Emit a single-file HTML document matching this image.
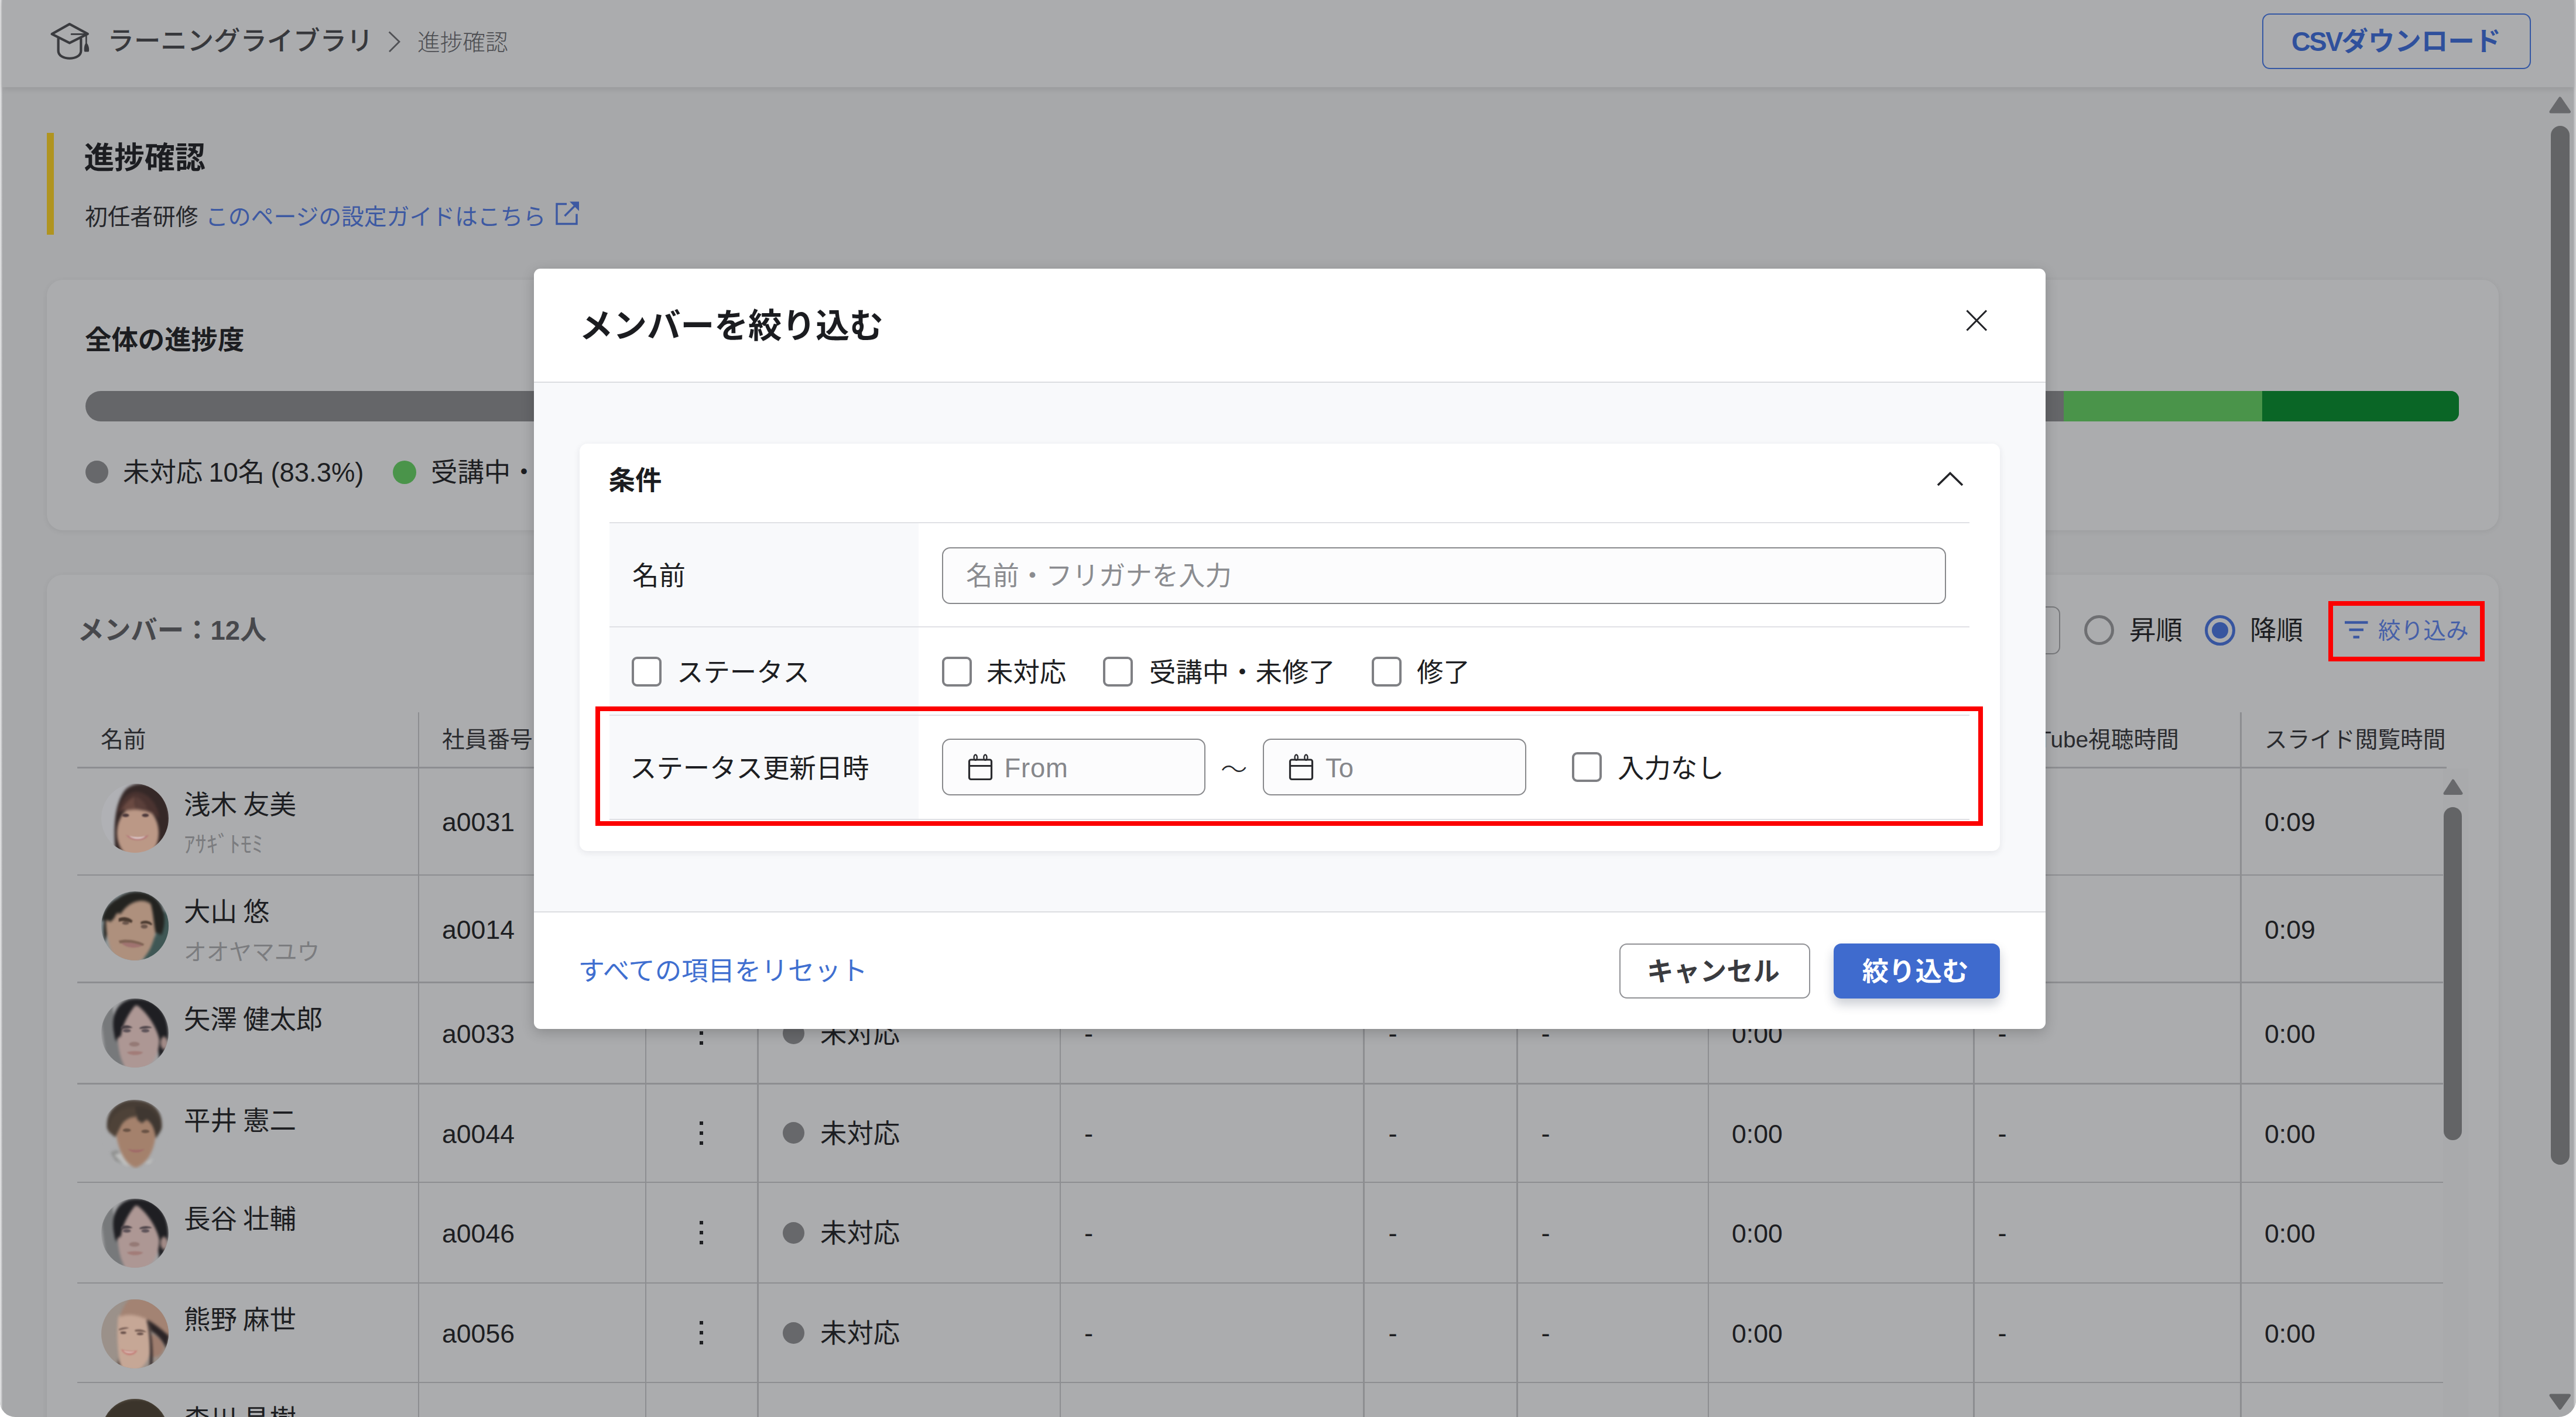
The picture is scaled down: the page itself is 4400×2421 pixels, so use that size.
<!DOCTYPE html>
<html lang="ja">
<head>
<meta charset="utf-8">
<title>進捗確認</title>
<style>
*{box-sizing:border-box;margin:0;padding:0}
html,body{width:4400px;height:2421px;overflow:hidden;background:#fff}
body{position:relative;font-family:"Liberation Sans","Noto Sans CJK JP",sans-serif;color:#1d1e22;font-size:45.4px;line-height:1;word-spacing:-.053em}
.abs{position:absolute}
.t{position:absolute;white-space:nowrap;line-height:60px;height:60px}
.b{font-weight:700}
#win{position:absolute;left:0;top:0;width:4400px;height:2421px;background:#a7a8aa;border-radius:0 0 30px 26px;overflow:hidden}
#edgeL{position:absolute;left:0;top:0;width:4px;height:2421px;background:linear-gradient(90deg,#e9e9ea,#b4b5b7)}
#edgeR{position:absolute;left:4396px;top:0;width:4px;height:2421px;background:linear-gradient(90deg,#b4b5b7,#d5d5d6)}
#hdr{position:absolute;left:4px;top:0;width:4392px;height:149px;background:#abacae;box-shadow:0 3px 10px rgba(0,0,0,.10)}
.card{position:absolute;background:#abacae;border-radius:27px;box-shadow:0 2px 10px rgba(0,0,0,.07)}
.hl{position:absolute;height:2.6px;background:#8d8e91}
.vl{position:absolute;width:2.6px;background:#8d8e91}
.dot{position:absolute;border-radius:50%;background:#67686b}
.kebab{position:absolute;width:6px;height:6px;background:#1f2023;box-shadow:0 17px 0 #1f2023,0 34px 0 #1f2023}
.av{position:absolute;width:115px;height:118px;border-radius:50%;overflow:hidden}
.red{position:absolute;border:8px solid #fc0000}
/* modal */
#modal{position:absolute;left:912px;top:459px;width:2582px;height:1299px;background:#fff;border-radius:11px;box-shadow:0 6px 22px rgba(0,0,0,.20);overflow:hidden}
.cb{position:absolute;width:51px;height:51px;border:4px solid #7f8084;border-radius:9px;background:#fff}
.inp{position:absolute;border:2.5px solid #88898c;border-radius:14px;background:#fcfcfd}
</style>
</head>
<body>
<div id="win">
<div id="edgeL"></div><div id="edgeR"></div>

<!-- ===== header ===== -->
<div id="hdr"></div>
<svg class="abs" style="left:80px;top:32px" width="80" height="76" viewBox="80 32 80 76" fill="none" stroke="#3a3b3f" stroke-width="4.2" stroke-linejoin="round" stroke-linecap="round">
<path d="M118.8 41.2 L149.8 57.9 L118.8 73.4 L88.6 58.1 Z"/>
<path d="M99.6 66 V87 C99.6 104 138.3 104 138.3 87 V66"/>
<path d="M122 58.4 H147.3 V75" stroke-width="2.6"/>
<path d="M146.6 75.5 C145 79 144.6 83 145 87.2 H150.8 C151.4 83 150.4 79 148.4 75.5 Z" fill="#3a3b3f" stroke-width="2.4"/>
</svg>
<div class="t" style="left:183.5px;top:41px;font-weight:500;color:#37383c;font-family:'Liberation Sans','Noto Sans CJK JP',sans-serif">ラーニングライブラリ</div>
<svg class="abs" style="left:655px;top:48px" width="36" height="46" viewBox="655 48 36 46" fill="none" stroke="#505155" stroke-width="2.8"><path d="M664.6 54.5 L682 71.3 L665 88.3"/></svg>
<div class="t" style="left:713px;top:43px;font-size:38.7px;color:#4d4e52;font-weight:300">進捗確認</div>

<div class="abs" style="left:3863.5px;top:22.5px;width:459px;height:95px;border:2.6px solid #3558a4;border-radius:13px"></div>
<div class="t b" style="left:3864px;width:458px;text-align:center;top:42px;color:#2f509c"><span style="letter-spacing:-2.6px">CSV</span>ダウンロード</div>

<!-- scrollbar main -->
<svg class="abs" style="left:4350px;top:160px" width="46" height="40" viewBox="4350 160 46 40"><path d="M4372.7 168 L4388.5 191 H4357 Z" fill="#68696c" stroke="#68696c" stroke-width="5" stroke-linejoin="round"/></svg>
<div class="abs" style="left:4357px;top:215px;width:32px;height:1775px;border-radius:16px;background:#636466"></div>
<svg class="abs" style="left:4350px;top:2376px" width="46" height="40" viewBox="4350 2376 46 40"><path d="M4372.7 2406 L4388.5 2384 H4357 Z" fill="#636466" stroke="#636466" stroke-width="5" stroke-linejoin="round"/></svg>

<!-- ===== page heading ===== -->
<div class="abs" style="left:80px;top:227px;width:12px;height:174px;background:#b09420"></div>
<div class="t b" style="left:143.5px;top:240px;font-size:51.8px;color:#1c1d21">進捗確認</div>
<div class="t" style="left:145px;top:341px;font-size:38.7px;color:#25262a">初任者研修</div>
<div class="t" style="left:351px;top:341px;font-size:38.8px;color:#3d59a2">このページの設定ガイドはこちら</div>
<svg class="abs" style="left:945px;top:338px" width="50" height="50" viewBox="945 338 50 50" fill="none" stroke="#3d59a2" stroke-width="3.4"><path d="M968 348.5 H951 V382.5 H985 V365.5"/><path d="M964.5 369 L986 347.5"/><path d="M973 344.4 H989 V360.4 Z" fill="#3d59a2" stroke="none"/></svg>

<!-- ===== card 1 ===== -->
<div class="card" style="left:80px;top:478px;width:4188px;height:428px"></div>
<div class="t b" style="left:145px;top:552px;font-size:45.4px;color:#1c1d21">全体の進捗度</div>
<div class="abs" style="left:146px;top:668px;width:4054px;height:52px;border-radius:26px 14px 14px 26px;overflow:hidden;background:#656669">
 <div class="abs" style="left:3379px;top:0;width:339px;height:52px;background:#4a944a"></div>
 <div class="abs" style="left:3718px;top:0;width:340px;height:52px;background:#0a6626"></div>
</div>
<div class="dot" style="left:146px;top:787px;width:39px;height:39px"></div>
<div class="t" style="left:210px;top:778px;">未対応 10名 (83.3%)</div>
<div class="dot" style="left:671px;top:787px;width:40px;height:40px;background:#4a944a"></div>
<div class="t" style="left:736px;top:778px">受講中・未修了 1名 (8.3%)</div>

<!-- ===== card 2 ===== -->
<div class="card" style="left:80px;top:982px;width:4188px;height:1600px"></div>
<div class="t b" style="left:132.5px;top:1048px;color:#47484c">メンバー：12人</div>
<div class="abs" style="left:3000px;top:1036px;width:519px;height:82px;border:2.6px solid #77787b;border-radius:13px"></div>
<div class="abs" style="left:3560px;top:1051px;width:51px;height:51px;border-radius:50%;border:5.4px solid #6e6f72"></div>
<div class="t" style="left:3637px;top:1048px">昇順</div>
<div class="abs" style="left:3766px;top:1051px;width:52px;height:52px;border-radius:50%;border:5.6px solid #37559f"></div>
<div class="abs" style="left:3778px;top:1063px;width:28px;height:28px;border-radius:50%;background:#37559f"></div>
<div class="t" style="left:3843px;top:1048px">降順</div>
<svg class="abs" style="left:4000px;top:1055px" width="50" height="42" viewBox="4000 1055 50 42" fill="none" stroke="#3a57a2" stroke-width="4.6"><path d="M4005 1063.5 H4044.5 M4012.5 1076 H4037 M4019.5 1088.5 H4030"/></svg>
<div class="t" style="left:4062px;top:1048px;font-size:38.7px;color:#4660a8">絞り込み</div>
<div class="red" style="left:3977px;top:1027px;width:267px;height:103px"></div>

<!--TABLE-->
<div class="t" style="left:172px;top:1234.0px;font-size:38.7px;color:#2a2b2f;">名前</div>
<div class="t" style="left:755px;top:1234.0px;font-size:38.7px;color:#2a2b2f;">社員番号</div>
<div class="t" style="left:1335px;top:1234.0px;font-size:38.7px;color:#2a2b2f;">ステータス</div>
<div class="t" style="left:1852px;top:1234.0px;font-size:38.7px;color:#2a2b2f;">ステータス更新日時</div>
<div class="t" style="left:2370px;top:1234.0px;font-size:38.7px;color:#2a2b2f;">受講率</div>
<div class="t" style="left:2632px;top:1234.0px;font-size:38.7px;color:#2a2b2f;">テスト</div>
<div class="t" style="left:2958px;top:1234.0px;font-size:38.7px;color:#2a2b2f;">動画視聴時間</div>
<div class="t" style="left:3415px;top:1234.0px;font-size:38.7px;color:#2a2b2f;">YouTube視聴時間</div>
<div class="t" style="left:3868px;top:1234.0px;font-size:38.7px;color:#2a2b2f;">スライド閲覧時間</div>
<div class="hl" style="left:132px;top:1310px;width:4047px"></div>
<div class="hl" style="left:132px;top:1493.7px;width:4041px"></div>
<div class="hl" style="left:132px;top:1677.3px;width:4041px"></div>
<div class="hl" style="left:132px;top:1850.3px;width:4041px"></div>
<div class="hl" style="left:132px;top:2018.7px;width:4041px"></div>
<div class="hl" style="left:132px;top:2190.7px;width:4041px"></div>
<div class="hl" style="left:132px;top:2360.7px;width:4041px"></div>
<div class="vl" style="left:713.7px;top:1217px;height:1300px"></div>
<div class="vl" style="left:1101.7px;top:1217px;height:1300px"></div>
<div class="vl" style="left:1293.3px;top:1217px;height:1300px"></div>
<div class="vl" style="left:1809.7px;top:1217px;height:1300px"></div>
<div class="vl" style="left:2328.2px;top:1217px;height:1300px"></div>
<div class="vl" style="left:2590.2px;top:1217px;height:1300px"></div>
<div class="vl" style="left:2916.7px;top:1217px;height:1300px"></div>
<div class="vl" style="left:3370.2px;top:1217px;height:1300px"></div>
<div class="vl" style="left:3826.4px;top:1217px;height:1300px"></div>
<div class="av" style="left:172.5px;top:1339.0px"><svg width="115" height="118" viewBox="0 0 116 118" preserveAspectRatio="none"><rect width="116" height="118" fill="#b0b1b5"/><g style="filter:blur(2.4px)">
<path d="M25 122 C20 80 22 36 40 12 C54 -6 96 -6 110 24 C122 50 120 90 112 122 Z" fill="#352827"/>
<ellipse cx="63" cy="84" rx="36" ry="46" fill="#bb9886"/>
<path d="M28 50 C34 22 50 14 60 14 C76 14 98 30 100 60 C88 48 74 44 58 44 C46 44 36 46 28 50 Z" fill="#4a3330"/>
<path d="M34 46 C42 30 52 24 58 22 C56 32 58 40 62 44 C50 42 42 44 34 46 Z" fill="#6a4a42"/>
<path d="M60 22 C70 26 76 34 80 44 C72 42 66 42 62 44 C58 36 58 28 60 22 Z" fill="#5a3f3a"/>
</g><g style="filter:blur(1.3px)">
<ellipse cx="42" cy="54" rx="6" ry="3" fill="#4d3a3c"/><ellipse cx="76" cy="54" rx="6" ry="3" fill="#4d3a3c"/>
<path d="M42 87 C52 92 72 92 82 87 C76 100 50 100 42 87 Z" fill="#b57c7b"/>
<path d="M48 89 C56 92 70 92 76 89 C72 96 54 96 48 89 Z" fill="#dccaca"/>
</g></svg></div>
<div class="t" style="left:314px;top:1345.5px;">浅木 友美</div>
<div class="t" style="left:314px;top:1413.0px;font-size:38.7px;color:#7b7c7f;">ｱｻｷﾞﾄﾓﾐ</div>
<div class="t" style="left:755px;top:1375.2px;font-size:44.6px;">a0031</div>
<div class="t" style="left:3868px;top:1375.2px;font-size:44.6px;">0:09</div>
<div class="av" style="left:172.5px;top:1522.5px"><svg width="115" height="118" viewBox="0 0 116 118" preserveAspectRatio="none"><rect width="116" height="118" fill="#8d989c"/><g style="filter:blur(2.4px)">
<path d="M70 122 L98 66 L100 30 L122 40 L122 122 Z" fill="#3f5755"/>
<path d="M6 88 C-6 30 30 0 62 0 C100 0 118 36 104 74 L92 70 L88 30 L40 36 L14 56 Z" fill="#232320"/>
<path d="M8 50 C10 42 22 36 34 38 C44 20 70 8 86 22 C96 34 96 60 92 76 C86 100 74 118 60 122 L30 122 C14 104 8 76 8 50 Z" fill="#ae907d"/>
<path d="M0 50 C6 20 30 4 58 8 C46 16 30 28 22 46 L16 52 C10 48 4 50 0 50 Z" fill="#232320"/>
<path d="M84 18 C98 28 100 54 94 72 C90 56 90 34 84 18 Z" fill="#232320"/>
</g><g style="filter:blur(1.3px)">
<path d="M30 46 C38 42 48 44 54 50 L52 54 C44 50 36 50 30 52 Z" fill="#4a3a30"/>
<path d="M68 52 C76 48 84 50 88 56 L86 58 C80 54 74 54 68 56 Z" fill="#4a3a30"/>
<ellipse cx="74" cy="60" rx="6" ry="3.5" fill="#6b564c"/><ellipse cx="42" cy="54" rx="6" ry="3" fill="#6b564c"/>
<path d="M34 88 C46 84 62 88 72 92 C62 98 44 98 34 88 Z" fill="#a07370"/>
<path d="M30 84 C44 80 64 84 74 90 L72 93 C60 88 44 86 32 89 Z" fill="#7f6354"/>
</g></svg></div>
<div class="t" style="left:314px;top:1529.0px;">大山 悠</div>
<div class="t" style="left:314px;top:1596.5px;font-size:38.7px;color:#7b7c7f;">オオヤマユウ</div>
<div class="t" style="left:755px;top:1558.8px;font-size:44.6px;">a0014</div>
<div class="t" style="left:3868px;top:1558.8px;font-size:44.6px;">0:09</div>
<div class="av" style="left:172.5px;top:1706.1px"><svg width="115" height="118" viewBox="0 0 116 118" preserveAspectRatio="none"><rect width="116" height="118" fill="#a1a2a4"/><g style="filter:blur(2.4px)">
<path d="M0 40 L18 10 L40 118 L10 118 Z" fill="#77797b"/>
<path d="M26 74 C10 30 30 -2 62 0 C104 0 124 40 112 86 L100 104 L92 40 L40 30 Z" fill="#1f1f23"/>
<path d="M28 56 C30 30 46 14 60 12 C80 14 98 36 100 70 C100 96 88 116 70 122 L44 122 C32 106 28 82 28 56 Z" fill="#ad9794"/>
<path d="M24 70 C16 36 36 10 60 10 C48 24 36 44 34 64 Z" fill="#1f1f23"/>
<path d="M60 10 C88 12 106 40 102 78 C98 54 84 28 60 10 Z" fill="#1f1f23"/>
<ellipse cx="108" cy="76" rx="6" ry="11" fill="#a18a86"/>
</g><g style="filter:blur(1.3px)">
<path d="M34 48 C42 44 50 46 54 50 L34 52 Z M66 50 C72 46 82 46 88 50 L66 52 Z" fill="#4b4247"/>
<ellipse cx="44" cy="55" rx="7" ry="3" fill="#5d5258"/><ellipse cx="76" cy="55" rx="7" ry="3" fill="#5d5258"/>
<ellipse cx="57" cy="78" rx="9" ry="4" fill="#957a76"/>
<path d="M44 92 C52 89 64 89 72 92 C66 98 50 98 44 92 Z" fill="#a27c78"/>
</g></svg></div>
<div class="t" style="left:314px;top:1712.6px;">矢澤 健太郎</div>
<div class="t" style="left:755px;top:1737.1px;font-size:44.6px;">a0033</div>
<div class="kebab" style="left:1195px;top:1745.1px"></div>
<div class="dot" style="left:1336.5px;top:1746.6px;width:37px;height:37px"></div>
<div class="t" style="left:1401px;top:1737.1px;">未対応</div>
<div class="t" style="left:1852px;top:1737.1px;">-</div>
<div class="t" style="left:2371.5px;top:1737.1px;">-</div>
<div class="t" style="left:2632.5px;top:1737.1px;">-</div>
<div class="t" style="left:3412.5px;top:1737.1px;">-</div>
<div class="t" style="left:2958px;top:1737.1px;font-size:44.6px;">0:00</div>
<div class="t" style="left:3868px;top:1737.1px;font-size:44.6px;">0:00</div>
<div class="av" style="left:172.5px;top:1879.1px"><svg width="115" height="118" viewBox="0 0 116 118" preserveAspectRatio="none"><rect width="116" height="118" fill="#abacae"/><g style="filter:blur(2.4px)">
<path d="M16 90 L26 86 L46 100 L44 112 L24 104 Z" fill="#8e8f8e"/>
<path d="M22 94 L44 88 L60 114 L40 112 Z" fill="#bdbebd"/>
<path d="M72 108 L90 100 L84 110 Z" fill="#bdbebd"/>
<path d="M10 50 C6 16 34 -2 58 0 C88 0 108 20 104 50 L96 62 L88 36 L26 40 L22 60 Z" fill="#473d35"/>
<path d="M24 44 C30 30 50 24 60 26 C76 26 92 34 94 52 C94 80 82 108 60 116 C40 112 26 80 24 44 Z" fill="#a4816c"/>
<path d="M12 54 C14 24 40 10 60 14 L60 30 C52 28 40 34 34 44 L24 64 Z" fill="#4e4238"/>
<path d="M58 12 C84 8 104 28 102 54 L94 66 C92 48 86 38 78 34 L70 40 L62 34 Z" fill="#3f3731"/>
</g><g style="filter:blur(1.3px)">
<ellipse cx="44" cy="52" rx="7" ry="3" fill="#6a5345"/><ellipse cx="76" cy="54" rx="7" ry="3" fill="#6a5345"/>
<path d="M46 84 C54 86 66 86 74 84 C68 92 52 92 46 84 Z" fill="#a06b68"/>
</g></svg></div>
<div class="t" style="left:314px;top:1885.6px;">平井 憲二</div>
<div class="t" style="left:755px;top:1907.8px;font-size:44.6px;">a0044</div>
<div class="kebab" style="left:1195px;top:1915.8px"></div>
<div class="dot" style="left:1336.5px;top:1917.3px;width:37px;height:37px"></div>
<div class="t" style="left:1401px;top:1907.8px;">未対応</div>
<div class="t" style="left:1852px;top:1907.8px;">-</div>
<div class="t" style="left:2371.5px;top:1907.8px;">-</div>
<div class="t" style="left:2632.5px;top:1907.8px;">-</div>
<div class="t" style="left:3412.5px;top:1907.8px;">-</div>
<div class="t" style="left:2958px;top:1907.8px;font-size:44.6px;">0:00</div>
<div class="t" style="left:3868px;top:1907.8px;font-size:44.6px;">0:00</div>
<div class="av" style="left:172.5px;top:2047.5px"><svg width="115" height="118" viewBox="0 0 116 118" preserveAspectRatio="none"><rect width="116" height="118" fill="#a1a2a4"/><g style="filter:blur(2.4px)">
<path d="M0 40 L18 10 L40 118 L10 118 Z" fill="#77797b"/>
<path d="M26 74 C10 30 30 -2 62 0 C104 0 124 40 112 86 L100 104 L92 40 L40 30 Z" fill="#1f1f23"/>
<path d="M28 56 C30 30 46 14 60 12 C80 14 98 36 100 70 C100 96 88 116 70 122 L44 122 C32 106 28 82 28 56 Z" fill="#ad9794"/>
<path d="M24 70 C16 36 36 10 60 10 C48 24 36 44 34 64 Z" fill="#1f1f23"/>
<path d="M60 10 C88 12 106 40 102 78 C98 54 84 28 60 10 Z" fill="#1f1f23"/>
<ellipse cx="108" cy="76" rx="6" ry="11" fill="#a18a86"/>
</g><g style="filter:blur(1.3px)">
<path d="M34 48 C42 44 50 46 54 50 L34 52 Z M66 50 C72 46 82 46 88 50 L66 52 Z" fill="#4b4247"/>
<ellipse cx="44" cy="55" rx="7" ry="3" fill="#5d5258"/><ellipse cx="76" cy="55" rx="7" ry="3" fill="#5d5258"/>
<ellipse cx="57" cy="78" rx="9" ry="4" fill="#957a76"/>
<path d="M44 92 C52 89 64 89 72 92 C66 98 50 98 44 92 Z" fill="#a27c78"/>
</g></svg></div>
<div class="t" style="left:314px;top:2054.0px;">長谷 壮輔</div>
<div class="t" style="left:755px;top:2078.0px;font-size:44.6px;">a0046</div>
<div class="kebab" style="left:1195px;top:2086.0px"></div>
<div class="dot" style="left:1336.5px;top:2087.5px;width:37px;height:37px"></div>
<div class="t" style="left:1401px;top:2078.0px;">未対応</div>
<div class="t" style="left:1852px;top:2078.0px;">-</div>
<div class="t" style="left:2371.5px;top:2078.0px;">-</div>
<div class="t" style="left:2632.5px;top:2078.0px;">-</div>
<div class="t" style="left:3412.5px;top:2078.0px;">-</div>
<div class="t" style="left:2958px;top:2078.0px;font-size:44.6px;">0:00</div>
<div class="t" style="left:3868px;top:2078.0px;font-size:44.6px;">0:00</div>
<div class="av" style="left:172.5px;top:2219.5px"><svg width="115" height="118" viewBox="0 0 116 118" preserveAspectRatio="none"><rect width="116" height="118" fill="#9b918a"/><g style="filter:blur(2.4px)">
<path d="M29 30 C34 22 50 20 62 24 C78 28 86 40 86 62 C88 92 80 112 62 122 L36 122 C28 100 26 60 29 30 Z" fill="#c6a796"/>
<path d="M84 60 C96 60 108 72 108 84 C104 96 96 100 88 98 Z" fill="#9e7d6e"/>
<path d="M80 32 C96 38 110 50 117 64 L112 84 C106 70 98 62 86 54 Z" fill="#2b2426"/>
<path d="M80 34 C86 50 90 88 88 116 L83 116 C85 90 84 56 78 36 Z" fill="#2e2628"/>
<path d="M32 30 C36 14 44 4 50 -2 L120 -2 L120 64 C112 60 100 46 78 34 C62 26 44 24 32 30 Z" fill="#a38373"/>
<path d="M29 100 C30 108 33 114 36 118 L28 116 Z" fill="#3a2b27"/>
</g><g style="filter:blur(1.3px)">
<path d="M30 51 C36 47 44 47 48 49 L31 53 Z M58 52 C66 50 74 52 78 56 L58 55 Z" fill="#7a6057"/>
<ellipse cx="38" cy="57" rx="5" ry="2.2" fill="#6a524c"/><ellipse cx="67" cy="59" rx="6" ry="2.2" fill="#6a524c"/>
<path d="M34 85 C42 88 54 89 62 87 C58 98 40 99 34 85 Z" fill="#c4817a"/>
<path d="M38 87.5 C44 89.5 52 90 58 89 C54 93 42 93 38 87.5 Z" fill="#dcc4bd"/>
</g></svg></div>
<div class="t" style="left:314px;top:2226.0px;">熊野 麻世</div>
<div class="t" style="left:755px;top:2249.0px;font-size:44.6px;">a0056</div>
<div class="kebab" style="left:1195px;top:2257.0px"></div>
<div class="dot" style="left:1336.5px;top:2258.5px;width:37px;height:37px"></div>
<div class="t" style="left:1401px;top:2249.0px;">未対応</div>
<div class="t" style="left:1852px;top:2249.0px;">-</div>
<div class="t" style="left:2371.5px;top:2249.0px;">-</div>
<div class="t" style="left:2632.5px;top:2249.0px;">-</div>
<div class="t" style="left:3412.5px;top:2249.0px;">-</div>
<div class="t" style="left:2958px;top:2249.0px;font-size:44.6px;">0:00</div>
<div class="t" style="left:3868px;top:2249.0px;font-size:44.6px;">0:00</div>
<div class="av" style="left:172.5px;top:2389.5px"><svg width="115" height="118" viewBox="0 0 116 118" preserveAspectRatio="none"><rect width="116" height="118" fill="#6d665a"/><g style="filter:blur(2.4px)">
<path d="M0 60 C0 10 40 0 60 0 C100 0 116 30 116 70 L116 118 L0 118 Z" fill="#3b342b"/>
<ellipse cx="58" cy="84" rx="32" ry="42" fill="#b6907a"/>
</g></svg></div>
<div class="t" style="left:314px;top:2396.0px;">森川 昌樹</div>
<div class="t" style="left:755px;top:2419.0px;font-size:44.6px;">a0061</div>
<div class="kebab" style="left:1195px;top:2427.0px"></div>
<div class="dot" style="left:1336.5px;top:2428.5px;width:37px;height:37px"></div>
<div class="t" style="left:1401px;top:2419.0px;">未対応</div>
<div class="t" style="left:1852px;top:2419.0px;">-</div>
<div class="t" style="left:2371.5px;top:2419.0px;">-</div>
<div class="t" style="left:2632.5px;top:2419.0px;">-</div>
<div class="t" style="left:3412.5px;top:2419.0px;">-</div>
<div class="t" style="left:2958px;top:2419.0px;font-size:44.6px;">0:00</div>
<div class="t" style="left:3868px;top:2419.0px;font-size:44.6px;">0:00</div>
<div class="abs" style="left:4173px;top:1313px;width:43px;height:1110px;background:#a9aaac"></div>
<svg class="abs" style="left:4168px;top:1324px" width="46" height="40" viewBox="4168 1324 46 40"><path d="M4190 1334 L4204 1355.500 H4176 Z" fill="#68696c" stroke="#68696c" stroke-width="5" stroke-linejoin="round"/></svg>
<div class="abs" style="left:4174px;top:1379px;width:31px;height:569px;border-radius:15.5px;background:#636466"></div>
<!--/TABLE-->

<!--MODAL-->
<div id="modal"><div class="abs" style="left:-912px;top:-459px;width:4400px;height:2421px">
<div class="abs" style="left:912px;top:654px;width:2582px;height:905px;background:#f8f9fb"></div>
<div class="abs" style="left:912px;top:652px;width:2582px;height:2.2px;background:#dcdde1"></div>
<div class="abs" style="left:912px;top:1557px;width:2582px;height:2.2px;background:#dcdde1"></div>
<div class="t b" style="left:989.5px;top:527px;font-size:57.7px;color:#1b1c20">メンバーを絞り込む</div>
<svg class="abs" style="left:3350px;top:522px" width="52" height="52" viewBox="3350 522 52 52" fill="none" stroke="#232428" stroke-width="3.2"><path d="M3359.5 530.5 L3393 564.5 M3393 530.5 L3359.5 564.5"/></svg>

<div class="abs" style="left:990px;top:758px;width:2426px;height:696px;background:#fff;border-radius:13px;box-shadow:0 3px 12px rgba(30,35,60,.09)"></div>
<div class="t b" style="left:1039.5px;top:792px;color:#1b1c20">条件</div>
<svg class="abs" style="left:3300px;top:796px" width="62" height="44" viewBox="3300 796 62 44" fill="none" stroke="#232428" stroke-width="3.6"><path d="M3310 829 L3331 808.5 L3352 829"/></svg>

<div class="abs" style="left:1041px;top:894px;width:528px;height:506px;background:#f8f9fb"></div>
<div class="abs" style="left:1041px;top:892px;width:2323px;height:2.2px;background:#e0e1e5"></div>
<div class="abs" style="left:1041px;top:1069.7px;width:2323px;height:2.2px;background:#e0e1e5"></div>
<div class="abs" style="left:1041px;top:1221px;width:2323px;height:2.2px;background:#e0e1e5"></div>
<div class="abs" style="left:1041px;top:1398.5px;width:2323px;height:2.2px;background:#e0e1e5"></div>

<div class="t" style="left:1080px;top:955px">名前</div>
<div class="inp" style="left:1609px;top:935px;width:1715px;height:97px"></div>
<div class="t" style="left:1650px;top:955px;color:#8b8c90">名前・フリガナを入力</div>

<div class="cb" style="left:1079px;top:1122px"></div>
<div class="t" style="left:1156px;top:1120px">ステータス</div>
<div class="cb" style="left:1609px;top:1122px"></div>
<div class="t" style="left:1685px;top:1120px">未対応</div>
<div class="cb" style="left:1884px;top:1122px"></div>
<div class="t" style="left:1963px;top:1120px">受講中・未修了</div>
<div class="cb" style="left:2343px;top:1122px"></div>
<div class="t" style="left:2420px;top:1120px">修了</div>

<div class="t" style="left:1076px;top:1283.5px">ステータス更新日時</div>
<div class="inp" style="left:1609px;top:1262px;width:450px;height:97px"></div>
<svg class="abs" style="left:1648px;top:1284px" width="52" height="54" viewBox="1648 1284 52 54" fill="none" stroke="#2a2b2f" stroke-width="3.2" stroke-linejoin="round"><rect x="1655.5" y="1298" width="38" height="33.5" rx="3"/><path d="M1655.5 1308.5 H1693.5"/><ellipse cx="1666.2" cy="1294.2" rx="2.6" ry="4.7" stroke-width="2.4"/><ellipse cx="1682.9" cy="1294.2" rx="2.6" ry="4.7" stroke-width="2.4"/></svg>
<div class="t" style="left:1715.5px;top:1282.5px;letter-spacing:.8px;color:#86878b">From</div>
<div class="t" style="left:2085px;top:1286px;font-weight:300;color:#232428">〜</div>
<div class="inp" style="left:2157px;top:1262px;width:450px;height:97px"></div>
<svg class="abs" style="left:2195.5px;top:1284px" width="52" height="54" viewBox="1648 1284 52 54" fill="none" stroke="#2a2b2f" stroke-width="3.2" stroke-linejoin="round"><rect x="1655.5" y="1298" width="38" height="33.5" rx="3"/><path d="M1655.5 1308.5 H1693.5"/><ellipse cx="1666.2" cy="1294.2" rx="2.6" ry="4.7" stroke-width="2.4"/><ellipse cx="1682.9" cy="1294.2" rx="2.6" ry="4.7" stroke-width="2.4"/></svg>
<div class="t" style="left:2264px;top:1282.5px;color:#86878b">To</div>
<div class="cb" style="left:2685px;top:1285px"></div>
<div class="t" style="left:2763px;top:1284px">入力なし</div>
<div class="red" style="left:1017px;top:1207px;width:2370px;height:204px"></div>

<div class="t" style="left:987.5px;top:1630px;color:#3f6fd0">すべての項目をリセット</div>
<div class="abs" style="left:2766px;top:1612px;width:326px;height:94px;border:2.4px solid #909195;border-radius:13px;background:#fff"></div>
<div class="t b" style="left:2763.5px;width:326px;text-align:center;top:1631px;color:#3a3b3f">キャンセル</div>
<div class="abs" style="left:3132px;top:1612px;width:284px;height:94px;border-radius:13px;background:#3f6bce;box-shadow:0 10px 18px rgba(20,30,60,.22)"></div>
<div class="t b" style="left:3129.5px;width:284px;text-align:center;top:1631px;color:#fff">絞り込む</div>
</div></div>
<!--/MODAL-->
</div>
</body>
</html>
